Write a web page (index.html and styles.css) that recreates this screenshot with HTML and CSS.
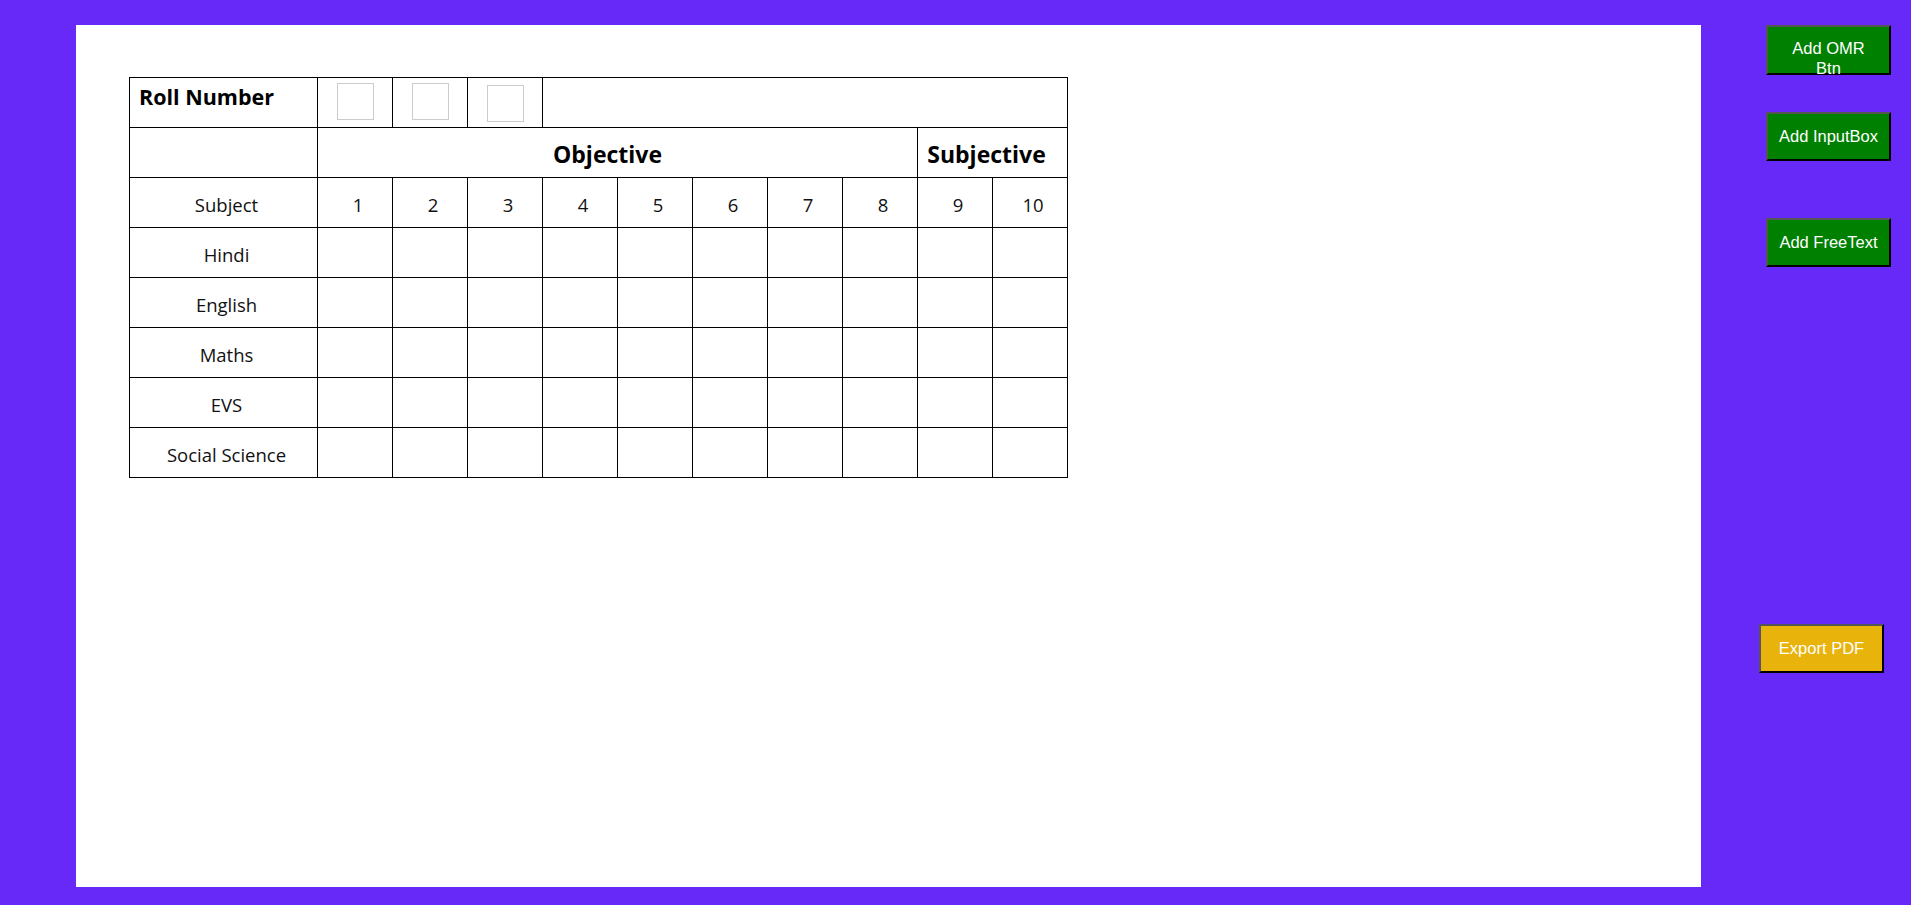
FILE: index.html
```html
<!DOCTYPE html>
<html>
<head>
<meta charset="utf-8">
<link rel="stylesheet" href="styles.css">
</head>
<body>
<div class="page">
  <main class="sheet">
    <table class="omr">
      <colgroup>
        <col class="c-subj">
        <col class="c-q"><col class="c-q"><col class="c-q"><col class="c-q"><col class="c-q">
        <col class="c-q"><col class="c-q"><col class="c-q"><col class="c-q"><col class="c-q">
      </colgroup>
      <tr>
        <td class="roll">Roll Number</td>
        <td class="box-cell"><span class="box"></span></td>
        <td class="box-cell"><span class="box"></span></td>
        <td class="box-cell"><span class="box box-low"></span></td>
        <td colspan="7" class="blank"></td>
      </tr>
      <tr>
        <td class="blank"></td>
        <td colspan="8" class="group obj">Objective</td>
        <td colspan="2" class="group sub">Subjective</td>
      </tr>
      <tr class="head">
        <td>Subject</td>
        <td>1</td><td>2</td><td>3</td><td>4</td><td>5</td>
        <td>6</td><td>7</td><td>8</td><td>9</td><td>10</td>
      </tr>
      <tr><td>Hindi</td><td></td><td></td><td></td><td></td><td></td><td></td><td></td><td></td><td></td><td></td></tr>
      <tr><td>English</td><td></td><td></td><td></td><td></td><td></td><td></td><td></td><td></td><td></td><td></td></tr>
      <tr><td>Maths</td><td></td><td></td><td></td><td></td><td></td><td></td><td></td><td></td><td></td><td></td></tr>
      <tr><td>EVS</td><td></td><td></td><td></td><td></td><td></td><td></td><td></td><td></td><td></td><td></td></tr>
      <tr><td>Social Science</td><td></td><td></td><td></td><td></td><td></td><td></td><td></td><td></td><td></td><td></td></tr>
    </table>
  </main>
  <aside class="tools">
    <button class="btn green omr-btn"><span>Add OMR</span><span>Btn</span></button>
    <button class="btn green input-btn">Add InputBox</button>
    <button class="btn green free-btn">Add FreeText</button>
    <button class="btn yellow export-btn">Export PDF</button>
  </aside>
</div>
</body>
</html>
```

FILE: styles.css
```css
html, body {
  margin: 0;
  padding: 0;
}
body {
  background: #6729f7;
  width: 1911px;
  height: 905px;
  overflow: hidden;
}
.page {
  display: flex;
  padding: 25px 0 0 76px;
}
.sheet {
  width: 1625px;
  height: 862px;
  background: #fff;
  padding: 52px 0 0 53px;
  box-sizing: border-box;
}
.omr {
  border-collapse: collapse;
  table-layout: fixed;
  width: 938px;
  font-family: "Open Sans", "Noto Sans", sans-serif;
  color: #000;
}
.c-subj { width: 188px; }
.c-q { width: 75px; }
.omr td {
  border: 1px solid #000;
  height: 45px;
  padding: 4px 0 0 6px;
  text-align: center;
  vertical-align: middle;
  font-size: 18.5px;
  line-height: normal;
  color: #111;
}
.omr td.blank {
  padding: 0;
  height: 49px;
}
.omr td.roll {
  text-align: left;
  vertical-align: top;
  font-weight: 700;
  font-size: 21.5px;
  color: #000;
  padding: 4px 0 0 9px;
}
.omr td.group {
  font-weight: 700;
  font-size: 23px;
  color: #000;
  height: 46px;
  padding: 3px 0 0 0;
}
.omr td.group.obj { padding-right: 20px; }
.omr td.group.sub { padding-right: 12px; }
.omr td.box-cell {
  line-height: 0;
  padding: 0;
  height: 49px;
}
.box {
  display: inline-block;
  width: 35px;
  height: 35px;
  border: 1px solid #ccc;
  position: relative;
  top: -1px;
}
.box-low {
  top: 1px;
}
.tools {
  width: 210px;
  display: flex;
  flex-direction: column;
  align-items: flex-start;
  padding-left: 65px;
  box-sizing: border-box;
}
.btn {
  width: 125px;
  height: 49px;
  box-sizing: border-box;
  font-family: "Liberation Sans", Arial, sans-serif;
  font-size: 16.5px;
  line-height: 19px;
  color: #fff;
  border-style: solid;
  border-width: 2px;
  border-color: #555 #000 #000 #555;
  padding: 0 4px;
  cursor: pointer;
}
.green { background: #008000; }
.yellow { background: #e8b30a; }
.omr-btn {
  height: 50px;
  display: flex;
  flex-direction: column;
  align-items: center;
  justify-content: flex-start;
  padding-top: 11px;
  line-height: 20px;
  overflow: visible;
}
.input-btn { margin-top: 37px; }
.free-btn { margin-top: 57px; }
.export-btn { margin-top: 357px; margin-left: -7px; }
```
